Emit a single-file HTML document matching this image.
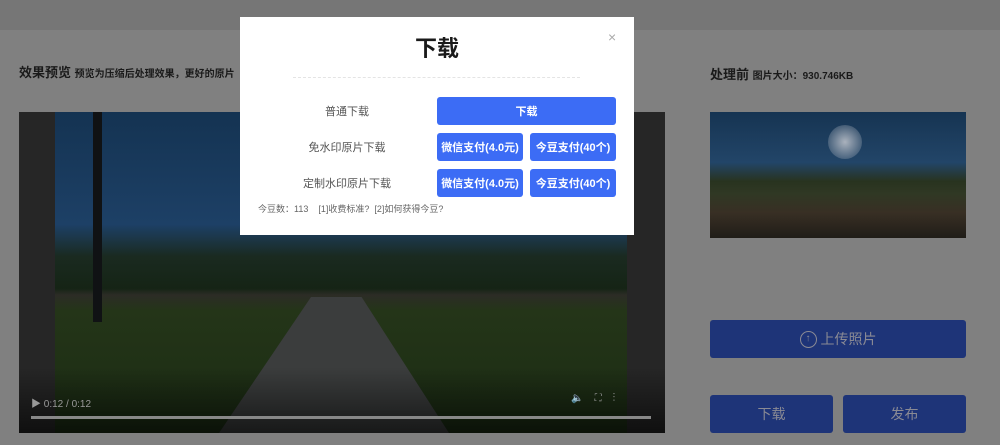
<!DOCTYPE html>
<html><head><meta charset="utf-8"><style>
*{margin:0;padding:0;box-sizing:border-box}
body{width:1000px;height:445px;overflow:hidden;background:#808080;font-family:"Liberation Sans","Noto Sans CJK SC",sans-serif;position:relative}
.a{position:absolute}
.btnd{position:absolute;background:#1e3478;border-radius:3px;color:#8a8a94;font-size:14px;display:flex;align-items:center;justify-content:center}
.mb{position:absolute;background:#3c6cf5;color:#fff;border-radius:3px;font-size:11px;font-weight:bold;display:flex;align-items:center;justify-content:center}
.lbl{position:absolute;width:200px;left:247px;text-align:center;font-size:11px;color:#555}
</style></head><body>
<div class="a" style="left:0;top:0;width:1000px;height:30px;background:#767676"></div>
<div class="a" style="left:19px;top:62px;font-size:13px;font-weight:bold;color:#1a1a1a">效果预览 <span style="font-size:10px">预览为压缩后处理效果，更好的原片</span></div>
<div class="a" style="left:710px;top:64px;font-size:13px;font-weight:bold;color:#1a1a1a">处理前 <span style="font-size:10px">图片大小：930.746KB</span></div>
<!-- video -->
<div class="a" style="left:19px;top:112px;width:646px;height:321px;background:#262626;overflow:hidden">
 <div class="a" style="left:36px;top:0;width:572px;height:321px;background:linear-gradient(#143352 0%,#1d4066 35%,#1a2a20 45%,#152415 55%,#2c2c26 57%,#243518 62%,#1b2c14 100%)"></div>
 <div class="a" style="left:200px;top:185px;width:230px;height:136px;background:#3b3d3d;clip-path:polygon(40% 0,62% 0,100% 100%,0 100%)"></div>
 <div class="a" style="left:74px;top:0;width:9px;height:210px;background:#101214"></div>
 <div class="a" style="left:0;top:255px;width:646px;height:66px;background:linear-gradient(transparent,rgba(0,0,0,.6))"></div>
 <div class="a" style="left:12px;top:283px;color:#999;font-size:10px">▶ 0:12 / 0:12</div>
 <div class="a" style="left:552px;top:281px;color:#999;font-size:10px">🔈&nbsp;&nbsp;&nbsp;&nbsp;⛶&nbsp;&nbsp;&nbsp;&nbsp;⋮</div>
 <div class="a" style="left:12px;top:304px;width:620px;height:3px;background:#888"></div>
</div>
<!-- right image -->
<div class="a" style="left:710px;top:112px;width:256px;height:126px;background:linear-gradient(#163452 0%,#224568 40%,#28331f 55%,#303824 65%,#382f24 80%,#201d18 100%)">
 <div class="a" style="left:118px;top:13px;width:34px;height:34px;border-radius:50%;background:radial-gradient(#aab2bd,rgba(100,120,150,0))"></div>
</div>
<div class="btnd" style="left:710px;top:320px;width:256px;height:38px"><span style="display:inline-block;width:17px;height:17px;border:1.5px solid #8a8a94;border-radius:50%;margin-right:4px;font-size:10px;line-height:14px;text-align:center">↑</span>上传照片</div>
<div class="btnd" style="left:710px;top:395px;width:123px;height:38px">下载</div>
<div class="btnd" style="left:843px;top:395px;width:123px;height:38px">发布</div>
<!-- modal -->
<div class="a" style="left:240px;top:17px;width:394px;height:218px;background:#fff"></div>
<div class="a" style="left:240px;top:31px;width:394px;text-align:center;font-size:22px;font-weight:bold;color:#1a1a1a">下载</div>
<div class="a" style="left:608px;top:29px;font-size:14px;color:#aaa">×</div>
<div class="a" style="left:293px;top:77px;width:287px;border-top:1px dashed #e4e4e4"></div>
<div class="lbl" style="top:103px">普通下载</div>
<div class="lbl" style="top:139px">免水印原片下载</div>
<div class="lbl" style="top:175px">定制水印原片下载</div>
<div class="mb" style="left:437px;top:97px;width:179px;height:28px">下载</div>
<div class="mb" style="left:437px;top:133px;width:86px;height:28px">微信支付(4.0元)</div>
<div class="mb" style="left:530px;top:133px;width:86px;height:28px">今豆支付(40个)</div>
<div class="mb" style="left:437px;top:169px;width:86px;height:28px">微信支付(4.0元)</div>
<div class="mb" style="left:530px;top:169px;width:86px;height:28px">今豆支付(40个)</div>
<div class="a" style="left:258px;top:202px;font-size:9px;color:#666;white-space:pre">今豆数：113    [1]收费标准?  [2]如何获得今豆?</div>
</body></html>
